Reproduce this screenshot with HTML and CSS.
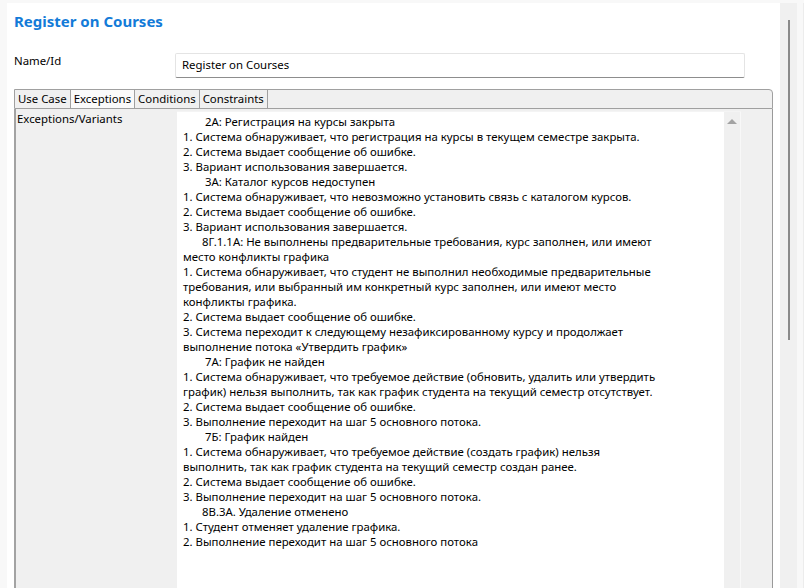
FILE: index.html
```html
<!DOCTYPE html>
<html lang="ru">
<head>
<meta charset="utf-8">
<title>Register on Courses</title>
<link rel="stylesheet" href="styles.css">
</head>
<body>
<div class="screen">
  <div class="gutter"></div>
  <div class="panel">
    <h1 class="title">Register on Courses</h1>
    <div class="field-row">
      <div class="field-label">Name/Id</div>
      <div class="input">Register on Courses</div>
    </div>
    <div class="tabs">
      <div class="tabbar">
        <div class="tab">Use Case</div>
        <div class="tab active">Exceptions</div>
        <div class="tab">Conditions</div>
        <div class="tab">Constraints</div>
      </div>
      <div class="tab-body">
        <div class="prop-label">Exceptions/Variants</div>
        <div class="textarea">
          <div class="text">
            <div class="line head">2А: Регистрация на курсы закрыта</div>
            <div class="line">1. Система обнаруживает, что регистрация на курсы в текущем семестре закрыта.</div>
            <div class="line">2. Система выдает сообщение об ошибке.</div>
            <div class="line">3. Вариант использования завершается.</div>
            <div class="line head">3А: Каталог курсов недоступен</div>
            <div class="line">1. Система обнаруживает, что невозможно установить связь с каталогом курсов.</div>
            <div class="line">2. Система выдает сообщение об ошибке.</div>
            <div class="line">3. Вариант использования завершается.</div>
            <div class="line head2">8Г.1.1А: Не выполнены предварительные требования, курс заполнен, или имеют</div>
            <div class="line">место конфликты графика</div>
            <div class="line">1. Система обнаруживает, что студент не выполнил необходимые предварительные</div>
            <div class="line">требования, или выбранный им конкретный курс заполнен, или имеют место</div>
            <div class="line">конфликты графика.</div>
            <div class="line">2. Система выдает сообщение об ошибке.</div>
            <div class="line">3. Система переходит к следующему незафиксированному курсу и продолжает</div>
            <div class="line">выполнение потока «Утвердить график»</div>
            <div class="line head">7А: График не найден</div>
            <div class="line">1. Система обнаруживает, что требуемое действие (обновить, удалить или утвердить</div>
            <div class="line">график) нельзя выполнить, так как график студента на текущий семестр отсутствует.</div>
            <div class="line">2. Система выдает сообщение об ошибке.</div>
            <div class="line">3. Выполнение переходит на шаг 5 основного потока.</div>
            <div class="line head">7Б: График найден</div>
            <div class="line">1. Система обнаруживает, что требуемое действие (создать график) нельзя</div>
            <div class="line">выполнить, так как график студента на текущий семестр создан ранее.</div>
            <div class="line">2. Система выдает сообщение об ошибке.</div>
            <div class="line">3. Выполнение переходит на шаг 5 основного потока.</div>
            <div class="line head2">8В.3А. Удаление отменено</div>
            <div class="line">1. Студент отменяет удаление графика.</div>
            <div class="line">2. Выполнение переходит на шаг 5 основного потока</div>
          </div>
          <div class="vscroll"><div class="arrow-up"></div></div>
        </div>
        <div class="body-spacer"></div>
      </div>
    </div>
  </div>
  <div class="outer-scroll"><div class="thumb"></div></div>
  <div class="edge"></div>
</div>
</body>
</html>
```
FILE: styles.css
```css
html, body {
  margin: 0;
  padding: 0;
}
body {
  background: #f8f8f8;
  font-family: "Noto Sans", "Open Sans", sans-serif;
  font-size: 11.4px;
  color: #000;
}
.screen {
  display: flex;
  width: 804px;
  height: 588px;
  padding-top: 3px;
  box-sizing: border-box;
  overflow: hidden;
}
.gutter {
  width: 7px;
  flex: none;
}
.panel {
  width: 773px;
  flex: none;
  background: #fff;
  padding: 0 7px;
  box-sizing: border-box;
  display: flex;
  flex-direction: column;
}
.title {
  margin: 0;
  padding-top: 8px;
  font-size: 15px;
  line-height: 20px;
  font-weight: 700;
  color: #137bd8;
}
.field-row {
  display: flex;
  margin-top: 22px;
}
.field-label {
  width: 161px;
  flex: none;
  line-height: 16px;
}
.input {
  width: 570px;
  height: 25px;
  box-sizing: border-box;
  border: 1px solid #e4e4e4;
  border-bottom-color: #8d8d8d;
  border-radius: 2px;
  padding-left: 6px;
  line-height: 22px;
}
.tabs {
  margin-top: 11px;
  flex: 1;
  display: flex;
  flex-direction: column;
}
.tabbar {
  display: flex;
  height: 20px;
  box-sizing: border-box;
  background: #f0f0f0;
  border: 1px solid #a0a0a0;
  border-top-right-radius: 4px;
}
.tab {
  padding: 0 3px;
  line-height: 18px;
  border-right: 1px solid #a0a0a0;
}
.tab.active {
  background: #fafafa;
}
.tab-body {
  flex: 1;
  display: flex;
  background: #f0f0f0;
  border-left: 2px solid #a3a3a3;
  border-right: 1px solid #999;
  padding-top: 2px;
}
.prop-label {
  width: 160px;
  flex: none;
  padding-left: 1px;
  line-height: 16px;
}
.textarea {
  width: 564px;
  flex: none;
  display: flex;
  background: #fff;
  border-top: 1px solid #f4f4f4;
}
.text {
  flex: 1;
  padding: 2px 0 0 6px;
  line-height: 15px;
}
.line {
  white-space: nowrap;
}
.line.head {
  padding-left: 22px;
}
.line.head2 {
  padding-left: 19px;
}
.vscroll {
  width: 16px;
  flex: none;
  background: #f0f0f0;
  border-right: 1px solid #f8f8f8;
  display: flex;
  justify-content: center;
  padding-top: 7px;
}
.arrow-up {
  width: 0;
  height: 0;
  border-left: 5px solid transparent;
  border-right: 5px solid transparent;
  border-bottom: 5px solid #a3a3a3;
}
.body-spacer {
  flex: 1;
}
.outer-scroll {
  width: 17px;
  flex: none;
  background: #f0f0f0;
  padding-top: 17px;
  box-sizing: border-box;
}
.thumb {
  width: 2px;
  height: 320px;
  margin-left: 8px;
  background: #8a8a8a;
}
.edge {
  width: 7px;
  flex: none;
  background: #f8f8f8;
  border-right: 1px solid #ececec;
  box-sizing: border-box;
}
```
